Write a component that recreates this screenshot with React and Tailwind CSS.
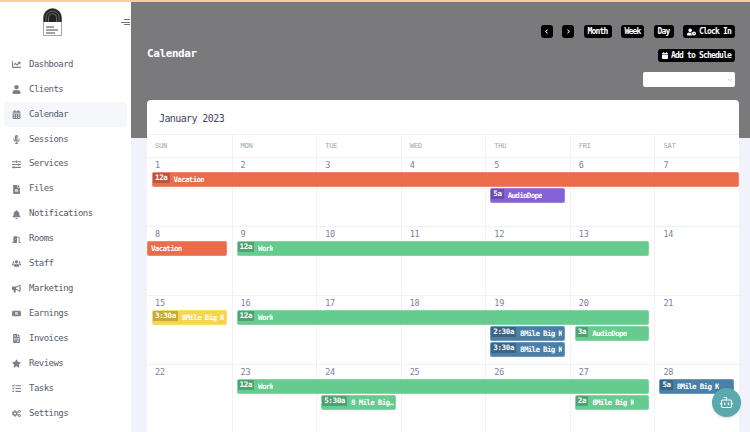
import React from 'react';
import { ChevronDown, Bot } from 'lucide-react';
import {
  FaChartLine, FaUser, FaCalendarAlt, FaMicrophoneAlt, FaSlidersH, FaFileAlt, FaBell, FaDoorOpen,
  FaUsers, FaBullhorn, FaMoneyBillAlt, FaFileInvoice, FaStar, FaTasks, FaCogs, FaUserClock, FaCalendar,
  FaChevronLeft, FaChevronRight,
} from 'react-icons/fa';

const NAV = [
  { label: 'Dashboard', icon: FaChartLine },
  { label: 'Clients', icon: FaUser },
  { label: 'Calendar', icon: FaCalendarAlt, active: true },
  { label: 'Sessions', icon: FaMicrophoneAlt },
  { label: 'Services', icon: FaSlidersH },
  { label: 'Files', icon: FaFileAlt },
  { label: 'Notifications', icon: FaBell },
  { label: 'Rooms', icon: FaDoorOpen },
  { label: 'Staff', icon: FaUsers },
  { label: 'Marketing', icon: FaBullhorn },
  { label: 'Earnings', icon: FaMoneyBillAlt },
  { label: 'Invoices', icon: FaFileInvoice },
  { label: 'Reviews', icon: FaStar },
  { label: 'Tasks', icon: FaTasks },
  { label: 'Settings', icon: FaCogs },
];

const DAYS = ['SUN', 'MON', 'TUE', 'WED', 'THU', 'FRI', 'SAT'];
const COLS = ['col-start-1', 'col-start-2', 'col-start-3', 'col-start-4', 'col-start-5', 'col-start-6', 'col-start-7'];

const ORANGE = 'bg-[#ea6c4a]';
const GREEN = 'bg-[#65cb8f]';
const PURPLE = 'bg-[#8561d6]';
const YELLOW = 'bg-[#f7d54a]';
const BLUE = 'bg-[#4a7fa8]';

const WEEKS = [
  {
    dates: [1, 2, 3, 4, 5, 6, 7],
    events: [
      { place: 'col-start-1 col-span-7 row-start-2 ml-[5px]', color: ORANGE, time: '12a', title: 'Vacation' },
      { place: 'col-start-5 col-span-1 row-start-3 mx-[5px]', color: PURPLE, time: '5a', title: 'AudioDope' },
    ],
  },
  {
    dates: [8, 9, 10, 11, 12, 13, 14],
    events: [
      { place: 'col-start-1 col-span-1 row-start-2 mr-[5px]', color: ORANGE, title: 'Vacation' },
      { place: 'col-start-2 col-span-5 row-start-2 mx-[5px]', color: GREEN, time: '12a', title: 'Work' },
    ],
  },
  {
    dates: [15, 16, 17, 18, 19, 20, 21],
    events: [
      { place: 'col-start-1 col-span-1 row-start-2 mx-[5px]', color: YELLOW, time: '3:30a', title: '8Mile Big K' },
      { place: 'col-start-2 col-span-5 row-start-2 mx-[5px]', color: GREEN, time: '12a', title: 'Work' },
      { place: 'col-start-5 col-span-1 row-start-3 mx-[5px]', color: BLUE, time: '2:30a', title: '8Mile Big K' },
      { place: 'col-start-6 col-span-1 row-start-3 mx-[5px]', color: GREEN, time: '3a', title: 'AudioDope' },
      { place: 'col-start-5 col-span-1 row-start-4 mx-[5px]', color: BLUE, time: '3:30a', title: '8Mile Big K' },
    ],
  },
  {
    dates: [22, 23, 24, 25, 26, 27, 28],
    events: [
      { place: 'col-start-2 col-span-5 row-start-2 mx-[5px]', color: GREEN, time: '12a', title: 'Work' },
      { place: 'col-start-7 col-span-1 row-start-2 mx-[5px]', color: BLUE, time: '5a', title: '8Mile Big K' },
      { place: 'col-start-3 col-span-1 row-start-3 mx-[5px]', color: GREEN, time: '5:30a', title: '8 Mile Big K' },
      { place: 'col-start-6 col-span-1 row-start-3 mx-[5px]', color: GREEN, time: '2a', title: '8Mile Big K' },
    ],
  },
];

const Logo = () => (
  <svg width="19" height="28" viewBox="0 0 19 28">
    <path d="M0.5 27.5V9.5a9 9 0 0 1 18 0v18z" fill="#fff" stroke="#666" strokeWidth="0.6" />
    <path d="M0.5 14V9.5a9 9 0 0 1 18 0V14z" fill="#222" />
    <path d="M3 14V9.5a6.5 6.5 0 0 1 13 0V14" fill="none" stroke="#888" strokeWidth="0.7" />
    <path d="M5.5 14V9.5a4 4 0 0 1 8 0V14" fill="none" stroke="#888" strokeWidth="0.7" />
    <path d="M3 19h8M3 22h12M3 25h9" stroke="#444" strokeWidth="1.2" />
  </svg>
);

const Btn = ({ children, className = '' }) => (
  <button className={`h-[13px] flex items-center justify-center gap-[3px] rounded-[3px] bg-black text-white font-bold text-[8px] tracking-[-0.8px] leading-none ${className}`}>
    {children}
  </button>
);

const CalEvent = ({ place, color, time, title }) => (
  <div className={`${place} ${color} h-[15px] flex items-start rounded-[2px] border border-white/20 overflow-hidden min-w-0`}>
    {time && (
      <span className="h-[10px] shrink-0 px-[2px] bg-black/20 text-white text-[7.5px] tracking-[-0.35px] leading-[9px] font-bold">{time}</span>
    )}
    <span className={`truncate text-white text-[7.5px] tracking-[-0.68px] leading-[13px] font-bold ${time ? 'pl-[4px]' : 'pl-[3px]'}`}>{title}</span>
  </div>
);

const Week = ({ week }) => (
  <div className="grid grid-cols-7 grid-rows-[14px_16px_16px_16px_1fr] h-[69.33px] border-b border-[#f1f2f6]">
    {week.dates.map((d, i) => (
      <div key={d} className={`${COLS[i]} row-start-1 row-span-full pl-[8px] pt-[2px] text-[8.5px] tracking-[-0.2px] leading-[11px] text-[#7a7f9e] ${i > 0 ? 'border-l border-[#f1f2f6]' : ''}`}>
        {d}
      </div>
    ))}
    {week.events.map((e, i) => (
      <CalEvent key={i} {...e} />
    ))}
  </div>
);

const App = () => {
  return (
    <div className="relative h-[432px] w-[750px] overflow-hidden font-['DejaVu_Sans_Mono',monospace]">
      <div className="h-[2px] bg-[#f6cf9d]" />
      <div className="flex h-[430px]">
        <aside className="w-[131px] shrink-0 bg-white">
          <div className="relative flex justify-center h-[50px] pt-[6px] pr-[27px]">
            <Logo />
            <div className="absolute right-[1px] top-[17px] flex flex-col items-end gap-[1.5px]">
              <span className="block h-px w-[6px] bg-[#6b7280]" />
              <span className="block h-px w-[9px] bg-[#6b7280]" />
              <span className="block h-px w-[6px] bg-[#6b7280]" />
            </div>
          </div>
          <nav className="px-[4px]">
            {NAV.map((item) => (
              <div
                key={item.label}
                className={`flex items-center h-[24.95px] pl-[8px] rounded-[4px] text-[9px] tracking-[-0.53px] text-[#555c6b] ${item.active ? 'bg-[#f6f7fb]' : ''}`}
              >
                <item.icon className="w-[9px] h-[9px] text-[#7b818c] shrink-0" />
                <span className="ml-[8px]">{item.label}</span>
              </div>
            ))}
          </nav>
        </aside>

        <main className="flex-1 min-w-0 bg-[#f2f3fa]">
          <div className="h-[136px] bg-[#7a7a7c] pl-[16px] pr-[15px] pt-[23px] flex justify-between">
            <h1 className="mt-[20px] text-[11px] tracking-[-0.4px] leading-[18px] font-bold text-white">Calendar</h1>
            <div className="flex flex-col items-end">
              <div className="flex gap-[9.5px]">
                <Btn className="w-[12px]"><FaChevronLeft className="w-[5px] h-[5px]" /></Btn>
                <Btn className="w-[12px]"><FaChevronRight className="w-[5px] h-[5px]" /></Btn>
                <Btn className="w-[28px]">Month</Btn>
                <Btn className="w-[23px]">Week</Btn>
                <Btn className="w-[20px]">Day</Btn>
                <Btn className="w-[52px]"><FaUserClock className="w-[9px] h-[8px]" />Clock In</Btn>
              </div>
              <Btn className="w-[77px] mt-[11px]"><FaCalendar className="w-[6px] h-[7px]" />Add to Schedule</Btn>
              <div className="mt-[10px] w-[92px] h-[15px] rounded-[2px] bg-white flex items-center justify-end pr-[2px]">
                <ChevronDown className="w-[6px] h-[6px] text-[#6b7280]" strokeWidth={1.5} />
              </div>
            </div>
          </div>

          <div className="ml-[16px] mr-[11px] -mt-[38px] bg-white rounded-t-[4px]">
            <div className="h-[35px] flex items-center pl-[12px] pt-[2px] text-[10px] tracking-[-0.6px] text-[#3f4663] border-b border-[#f1f2f6]">January 2023</div>
            <div className="grid grid-cols-7 h-[22.5px] border-b border-[#f1f2f6]">
              {DAYS.map((d, i) => (
                <div key={d} className={`flex items-center pl-[8px] text-[7px] tracking-[-0.2px] text-[#a0a5b0] ${i > 0 ? 'border-l border-[#f1f2f6]' : ''}`}>{d}</div>
              ))}
            </div>
            {WEEKS.map((w) => (
              <Week key={w.dates[0]} week={w} />
            ))}
          </div>
        </main>
      </div>

      {/* chat bot bubble */}
      <button className="absolute left-[712px] top-[388px] w-[29px] h-[29px] rounded-full bg-[#5aa9ad] flex items-center justify-center shadow-sm">
        <Bot className="w-[15px] h-[15px] text-white" strokeWidth={1.75} />
      </button>
    </div>
  );
};

export default App;
